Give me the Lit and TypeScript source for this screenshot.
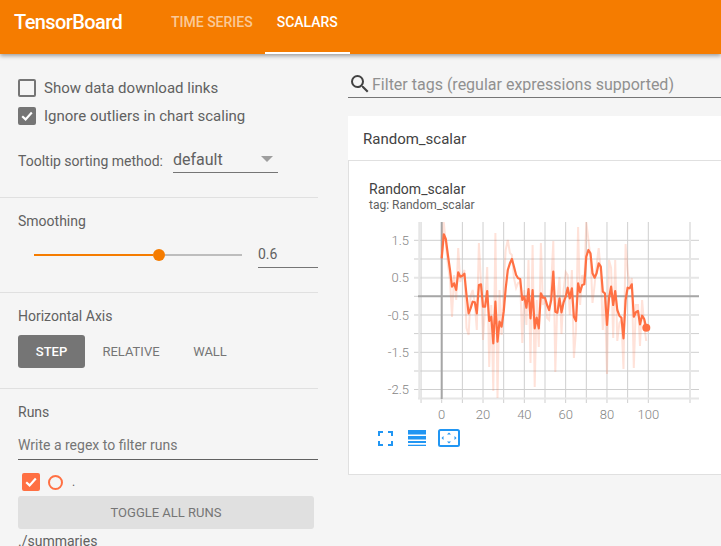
import { LitElement, html, css, svg } from "lit";
import { customElement } from "lit/decorators.js";

const X0 = 441.7;
const PX_PER_STEP = 2.066;

// y pixel of each step, traced from the chart
const SMOOTHED = [
  258.3, 234.3, 239, 255, 270, 286.7, 283.3, 290, 272.3, 276.7, 275.7, 273.7, 295, 313.3, 308.3, 301.7, 302.3, 313.3,
  285, 284.3, 306.7, 306.7, 291, 321, 316.7, 343.3, 301.7, 341.7, 321.7, 326.7, 311.7, 288.3, 270, 263.3, 259, 266.7,
  275, 278.3, 279, 300, 296.7, 307.7, 289, 318.3, 290, 328.3, 317.7, 328.3, 293.3, 297.7, 297.7, 305, 310, 300, 271.7,
  311.7, 312.7, 298.3, 312.3, 302.3, 296.7, 287.7, 298.3, 288.3, 316.7, 321, 283.3, 292.3, 285, 284.3, 256.7, 250,
  253.3, 273.3, 277.7, 273.3, 263.3, 266.7, 291.7, 293.3, 325, 298.3, 286.7, 305, 291, 310, 315.7, 317.7, 338.3, 300,
  287.7, 288.3, 284.3, 316.7, 312.3, 311, 324.3, 315.7, 319, 327.7,
];
const RAW = [
  258, 222, 244, 265, 280, 317, 275, 300, 248, 282, 274, 270, 328, 335, 296, 290, 303, 330, 243, 284, 340, 307, 267,
  367, 305, 391, 233, 398, 290, 335, 285, 250, 240, 253, 255, 278, 288, 283, 282, 343, 290, 325, 260, 363, 245, 387,
  300, 347, 243, 305, 298, 318, 320, 285, 241, 372, 300, 277, 334, 290, 272, 275, 315, 270, 358, 330, 227, 305, 275,
  283, 222, 240, 258, 303, 285, 265, 248, 272, 330, 297, 374, 260, 268, 338, 260, 341, 323, 320, 369, 244, 270, 288,
  278, 368, 305, 305, 346, 300, 325, 341,
];

const toPoints = (ys: number[]) => ys.map((y, i) => `${(X0 + i * PX_PER_STEP).toFixed(1)},${y}`).join(" ");

const Y_MINOR = [240.3, 296.3, 333.6, 352.3, 389.5];
const Y_MAJOR = [259, 277.7, 315, 370.9];
const Y_LABELS = [
  ["1.5", 240.3],
  ["0.5", 277.7],
  ["-0.5", 315],
  ["-1.5", 352.3],
  ["-2.5", 389.5],
] as const;
const X_LABELS = [0, 20, 40, 60, 80, 100];

@customElement("scalar-chart")
class ScalarChart extends LitElement {
  static styles = css`
    :host {
      display: block;
      height: 210px;
    }
    svg {
      display: block;
      width: 341px;
      height: 210px;
    }
    .grid {
      stroke: #cfcfcf;
      stroke-width: 1;
      fill: none;
    }
    .grid-major {
      stroke: #e6e6e6;
      stroke-width: 2;
    }
    .axis {
      stroke: #a6a6a6;
      stroke-width: 2;
    }
    .tick {
      font: 300 13px Roboto, sans-serif;
      fill: #858585;
    }
    .raw {
      fill: none;
      stroke: #ff7043;
      stroke-opacity: 0.2;
      stroke-width: 2;
    }
    .line {
      fill: none;
      stroke: #ff7043;
      stroke-width: 2.2;
      stroke-linejoin: round;
    }
  `;

  render() {
    const verticals = Array.from({ length: 12 }, (_, i) => X0 + (i - 1) * 20.66);
    return html`<svg viewBox="358 215 341 210">
      ${Y_MINOR.map((y) => svg`<line class="grid" x1="414" x2="699" y1=${y} y2=${y}></line>`)}
      ${Y_MAJOR.map((y) => svg`<line class="grid grid-major" x1="414" x2="699" y1=${y} y2=${y}></line>`)}
      ${verticals.map((x) => svg`<line class="grid" x1=${x} x2=${x} y1="222" y2="403"></line>`)}
      <line class="grid grid-major" x1="419.3" x2="419.3" y1="222" y2="399"></line>
      <line class="grid grid-major" x1="690" x2="690" y1="222" y2="403"></line>
      <line class="grid grid-major" x1="418" x2="699" y1="398.5" y2="398.5"></line>
      <line class="axis" x1="418" x2="699" y1="296.3" y2="296.3"></line>
      <line class="axis" x1=${X0} x2=${X0} y1="222" y2="399"></line>
      ${Y_LABELS.map(([t, y]) => svg`<text class="tick" x="409" y=${y + 4.5} text-anchor="end">${t}</text>`)}
      ${X_LABELS.map((t) => svg`<text class="tick" x=${X0 + t * PX_PER_STEP} y="419" text-anchor="middle">${t}</text>`)}
      <polyline class="raw" points=${toPoints(RAW)}></polyline>
      <polyline class="line" points=${toPoints(SMOOTHED)}></polyline>
      <circle cx="646.3" cy="327.7" r="4" fill="#ff7043"></circle>
    </svg>`;
  }
}

@customElement("app-root")
export class AppRoot extends LitElement {
  static styles = css`
    :host {
      display: flex;
      flex-direction: column;
      width: 721px;
      height: 546px;
      overflow: hidden;
      background: #f5f5f5;
      font-family: Roboto, sans-serif;
      color: #616161;
    }
    .toolbar {
      flex: none;
      display: flex;
      height: 54px;
      box-sizing: border-box;
      background: #f57c00;
      box-shadow: 0 2px 4px rgba(0, 0, 0, 0.35);
      color: #fff;
      position: relative;
      z-index: 1;
    }
    .brand {
      width: 145px;
      padding: 10px 0 0 14px;
      font-size: 20px;
      font-weight: 500;
      line-height: 24px;
      letter-spacing: -0.6px;
    }
    .tab {
      padding: 14px 12px 0;
      font-size: 14px;
      font-weight: 500;
      line-height: 16px;
      color: rgba(255, 255, 255, 0.6);
    }
    .tab.active {
      color: #fff;
      border-bottom: 2px solid #fff;
    }
    .body {
      flex: 1;
      display: flex;
      min-height: 0;
    }
    .sidebar {
      flex: none;
      width: 318px;
      margin-right: 30px;
    }
    .section {
      padding: 0 0 0 18px;
      border-bottom: 1px solid #e0e0e0;
    }
    .section:last-child {
      border-bottom: none;
    }
    .options {
      height: 144px;
      padding-top: 25px;
      box-sizing: border-box;
    }
    .check-row {
      display: flex;
      align-items: center;
      gap: 8px;
      height: 18px;
      margin-bottom: 10px;
      font-size: 15px;
    }
    .box {
      flex: none;
      width: 18px;
      height: 18px;
      box-sizing: border-box;
      border: 2px solid #757575;
      border-radius: 2px;
    }
    .box.checked {
      background: #757575;
    }
    .box svg {
      display: block;
      width: 14px;
      height: 14px;
    }
    .sort {
      display: flex;
      align-items: flex-end;
      gap: 10px;
      margin-top: 21px;
      font-size: 14px;
    }
    .sort-label {
      padding-bottom: 4px;
    }
    .select {
      display: flex;
      justify-content: space-between;
      align-items: center;
      width: 105px;
      height: 27px;
      box-sizing: border-box;
      border-bottom: 1px solid #757575;
      font-size: 16px;
    }
    .caret {
      width: 0;
      height: 0;
      margin-right: 5px;
      border-left: 6px solid transparent;
      border-right: 6px solid transparent;
      border-top: 6px solid #9e9e9e;
    }
    .smoothing {
      height: 95px;
      box-sizing: border-box;
      padding-top: 14px;
    }
    .label {
      font-size: 14px;
      line-height: 18px;
    }
    .slider-row {
      display: flex;
      align-items: flex-start;
      margin-top: 15px;
    }
    .slider {
      display: flex;
      align-items: center;
      width: 208px;
      height: 14px;
      margin: 3px 16px 0 16px;
    }
    .fill {
      height: 2px;
      width: 119px;
      background: #f57c00;
    }
    .knob {
      flex: none;
      width: 12px;
      height: 12px;
      border-radius: 50%;
      background: #f57c00;
    }
    .rest {
      flex: 1;
      height: 2px;
      background: #bdbdbd;
    }
    .value {
      flex: 1;
      height: 23px;
      box-sizing: border-box;
      border-bottom: 1px solid #757575;
      font-size: 14px;
      line-height: 18px;
    }
    .axis-section {
      height: 96px;
      box-sizing: border-box;
      padding-top: 14px;
    }
    .buttons {
      display: flex;
      margin-top: 10px;
    }
    .buttons span {
      display: flex;
      align-items: center;
      justify-content: center;
      height: 33px;
      font-size: 13px;
      color: #757575;
      border-radius: 3px;
    }
    .buttons .step {
      width: 67px;
      background: #757575;
      color: #fff;
      font-weight: 500;
    }
    .buttons .relative {
      width: 92px;
    }
    .buttons .wall {
      width: 66px;
    }
    .runs {
      padding-top: 14px;
    }
    .regex {
      height: 30px;
      margin-top: 9px;
      padding-top: 7px;
      border-bottom: 1px solid #616161;
      box-sizing: border-box;
      font-size: 14px;
      line-height: 16px;
      color: #757575;
    }
    .run-row {
      display: flex;
      align-items: center;
      height: 18px;
      margin: 13px 0 5px 4px;
    }
    .box.run {
      background: #ff7043;
      border-color: #ff7043;
    }
    .circle {
      width: 15px;
      height: 15px;
      box-sizing: border-box;
      margin: 0 9px 0 8px;
      border: 2px solid #ff7043;
      border-radius: 50%;
    }
    .dot {
      font-size: 12px;
    }
    .toggle {
      display: flex;
      align-items: center;
      justify-content: center;
      width: 296px;
      height: 33px;
      background: #e0e0e0;
      border-radius: 3px;
      font-size: 13px;
      color: #757575;
    }
    .dir {
      margin-top: 4px;
      font-size: 14px;
      line-height: 16px;
    }
    .main {
      flex: 1;
      min-width: 0;
    }
    .filter {
      display: flex;
      align-items: center;
      height: 44px;
      padding-top: 17px;
      box-sizing: border-box;
      border-bottom: 1px solid #757575;
      font-size: 16px;
      color: #909090;
    }
    .filter svg {
      flex: none;
      width: 24px;
      height: 24px;
    }
    .pane {
      margin-top: 18px;
      background: #fff;
    }
    .pane-head {
      height: 45px;
      box-sizing: border-box;
      padding: 14px 0 0 15px;
      border-bottom: 1px solid #e0e0e0;
      font-size: 15px;
      line-height: 18px;
      color: #424242;
      background: #fff;
    }
    .card {
      height: 314px;
      border-left: 1px solid #e0e0e0;
      border-bottom: 1px solid #e0e0e0;
      box-sizing: border-box;
      padding: 20px 0 0 20px;
    }
    .card-title {
      font-size: 14px;
      line-height: 16px;
      color: #424242;
    }
    .card-tag {
      margin-top: 2px;
      font-size: 12px;
      line-height: 13px;
      color: #616161;
    }
    scalar-chart {
      margin: 3px 0 0 -11px;
    }
    .icons {
      display: flex;
      align-items: center;
      gap: 12px;
      margin: 4px 0 0 9px;
    }
    .icons svg {
      display: block;
    }
    .icons .expand {
      margin-right: 3px;
    }
  `;

  render() {
    const check = html`<svg viewBox="0 0 14 14"><path d="M2.2 7.2 5.6 10.4 11.8 3.6" fill="none" stroke="#fff" stroke-width="2.2"></path></svg>`;
    return html`
      <div class="toolbar">
        <div class="brand">TensorBoard</div>
        <div class="tab">TIME SERIES</div>
        <div class="tab active">SCALARS</div>
      </div>
      <div class="body">
        <div class="sidebar">
          <div class="section options">
            <div class="check-row"><span class="box"></span>Show data download links</div>
            <div class="check-row"><span class="box checked">${check}</span>Ignore outliers in chart scaling</div>
            <div class="sort">
              <span class="sort-label">Tooltip sorting method:</span>
              <div class="select"><span>default</span><span class="caret"></span></div>
            </div>
          </div>
          <div class="section smoothing">
            <div class="label">Smoothing</div>
            <div class="slider-row">
              <div class="slider"><span class="fill"></span><span class="knob"></span><span class="rest"></span></div>
              <div class="value">0.6</div>
            </div>
          </div>
          <div class="section axis-section">
            <div class="label">Horizontal Axis</div>
            <div class="buttons">
              <span class="step">STEP</span><span class="relative">RELATIVE</span><span class="wall">WALL</span>
            </div>
          </div>
          <div class="section runs">
            <div class="label">Runs</div>
            <div class="regex">Write a regex to filter runs</div>
            <div class="run-row">
              <span class="box run">${check}</span><span class="circle"></span><span class="dot">.</span>
            </div>
            <div class="toggle">TOGGLE ALL RUNS</div>
            <div class="dir">./summaries</div>
          </div>
        </div>
        <div class="main">
          <div class="filter">
            <svg viewBox="0 0 24 24">
              <path
                fill="#424242"
                d="M15.5 14h-.79l-.28-.27A6.47 6.47 0 0 0 16 9.5 6.5 6.5 0 1 0 9.5 16c1.61 0 3.09-.59 4.23-1.57l.27.28v.79l5 4.99L20.49 19l-4.99-5zm-6 0C7.01 14 5 11.99 5 9.5S7.01 5 9.5 5 14 7.01 14 9.5 11.99 14 9.5 14z"
              ></path>
            </svg>
            <span>Filter tags (regular expressions supported)</span>
          </div>
          <div class="pane">
            <div class="pane-head">Random_scalar</div>
            <div class="card">
              <div class="card-title">Random_scalar</div>
              <div class="card-tag">tag: Random_scalar</div>
              <scalar-chart></scalar-chart>
              <div class="icons">
                <svg class="expand" width="15" height="15" viewBox="0 0 15 15" fill="none" stroke="#2196f3" stroke-width="2">
                  <path d="M1 5V1h4M10 1h4v4M14 10v4h-4M5 14H1v-4"></path>
                </svg>
                <svg width="18" height="16" viewBox="0 0 18 16" fill="#2196f3">
                  <rect width="18" height="4.5"></rect>
                  <rect y="6" width="18" height="3.5"></rect>
                  <rect y="11" width="18" height="2"></rect>
                  <rect y="14.7" width="18" height="1.3"></rect>
                </svg>
                <svg width="22" height="18" viewBox="0 0 22 18" fill="#2196f3">
                  <rect x="1" y="1" width="20" height="16" rx="1.5" fill="none" stroke="#2196f3" stroke-width="2"></rect>
                  <path d="M11 3.5 13 5.5H9zM11 14.5 9 12.5H13zM3.5 9 5.5 7V11zM18.5 9 16.5 11V7z"></path>
                </svg>
              </div>
            </div>
          </div>
        </div>
      </div>
    `;
  }
}
